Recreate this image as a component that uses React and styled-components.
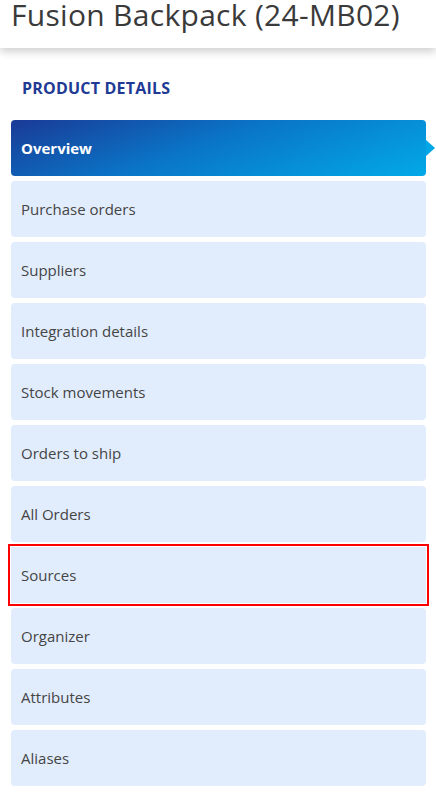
import React from "react";
import styled, { createGlobalStyle, css } from "styled-components";

const GlobalStyle = createGlobalStyle`
  html, body {
    margin: 0;
    padding: 0;
    background: #fff;
  }
  body {
    font-family: "Open Sans", "Liberation Sans", sans-serif;
  }
`;

const items = [
  "Overview",
  "Purchase orders",
  "Suppliers",
  "Integration details",
  "Stock movements",
  "Orders to ship",
  "All Orders",
  "Sources",
  "Organizer",
  "Attributes",
  "Aliases",
];

const App = () => {
  return (
    <Page>
      <GlobalStyle />
      <Header>
        <Title>Fusion Backpack (24-MB02)</Title>
      </Header>
      <Section>
        <SectionTitle>PRODUCT DETAILS</SectionTitle>
        <Nav>
          {items.map((label, i) => (
            <NavItem
              key={label}
              active={i === 0}
              highlighted={label === "Sources"}
            >
              {label}
            </NavItem>
          ))}
        </Nav>
      </Section>
    </Page>
  );
};

export default App;

const Page = styled.div({
  width: "436px",
  height: "794px",
  overflow: "hidden",
  background: "#fff",
});

const Header = styled.header({
  height: "48px",
  padding: "0 11px",
  boxSizing: "border-box",
  display: "flex",
  alignItems: "flex-start",
  boxShadow: "0 4px 8px rgba(0,0,0,0.18)",
  position: "relative",
});

const Title = styled.h1({
  margin: 0,
  fontWeight: 400,
  fontSize: "30px",
  lineHeight: "30px",
  letterSpacing: "0.3px",
  color: "#3a3a3a",
  whiteSpace: "nowrap",
});

const Section = styled.div({
  padding: "30px 10px 0 11px",
});

const SectionTitle = styled.h2({
  margin: "0 0 0 11px",
  fontSize: "16px",
  lineHeight: "20px",
  fontWeight: 700,
  color: "#1e3a94",
  letterSpacing: "0.2px",
});

const Nav = styled.nav({
  marginTop: "22px",
  display: "flex",
  flexDirection: "column",
  gap: "5px",
});

const NavItem = styled.div.withConfig({
  shouldForwardProp: (p) => p !== "active" && p !== "highlighted",
})`
  position: relative;
  height: 56px;
  box-sizing: border-box;
  display: flex;
  align-items: center;
  padding-left: 10px;
  border-radius: 4px;
  background: #e1edfd;
  color: #454545;
  font-size: 15px;

  ${(p) =>
    p.active &&
    css`
      background: linear-gradient(160deg, #1a3a96 0%, #0a74c6 45%, #02a9e8 100%);
      color: #fff;
      font-weight: 700;

      &::after {
        content: "";
        position: absolute;
        right: -9px;
        top: 20px;
        border-style: solid;
        border-width: 8px 0 8px 9px;
        border-color: transparent transparent transparent #03a6e6;
      }
    `}

  ${(p) =>
    p.highlighted &&
    css`
      border-radius: 0;
      outline: 2px solid #ff0000;
      outline-offset: 1px;
    `}
`;
